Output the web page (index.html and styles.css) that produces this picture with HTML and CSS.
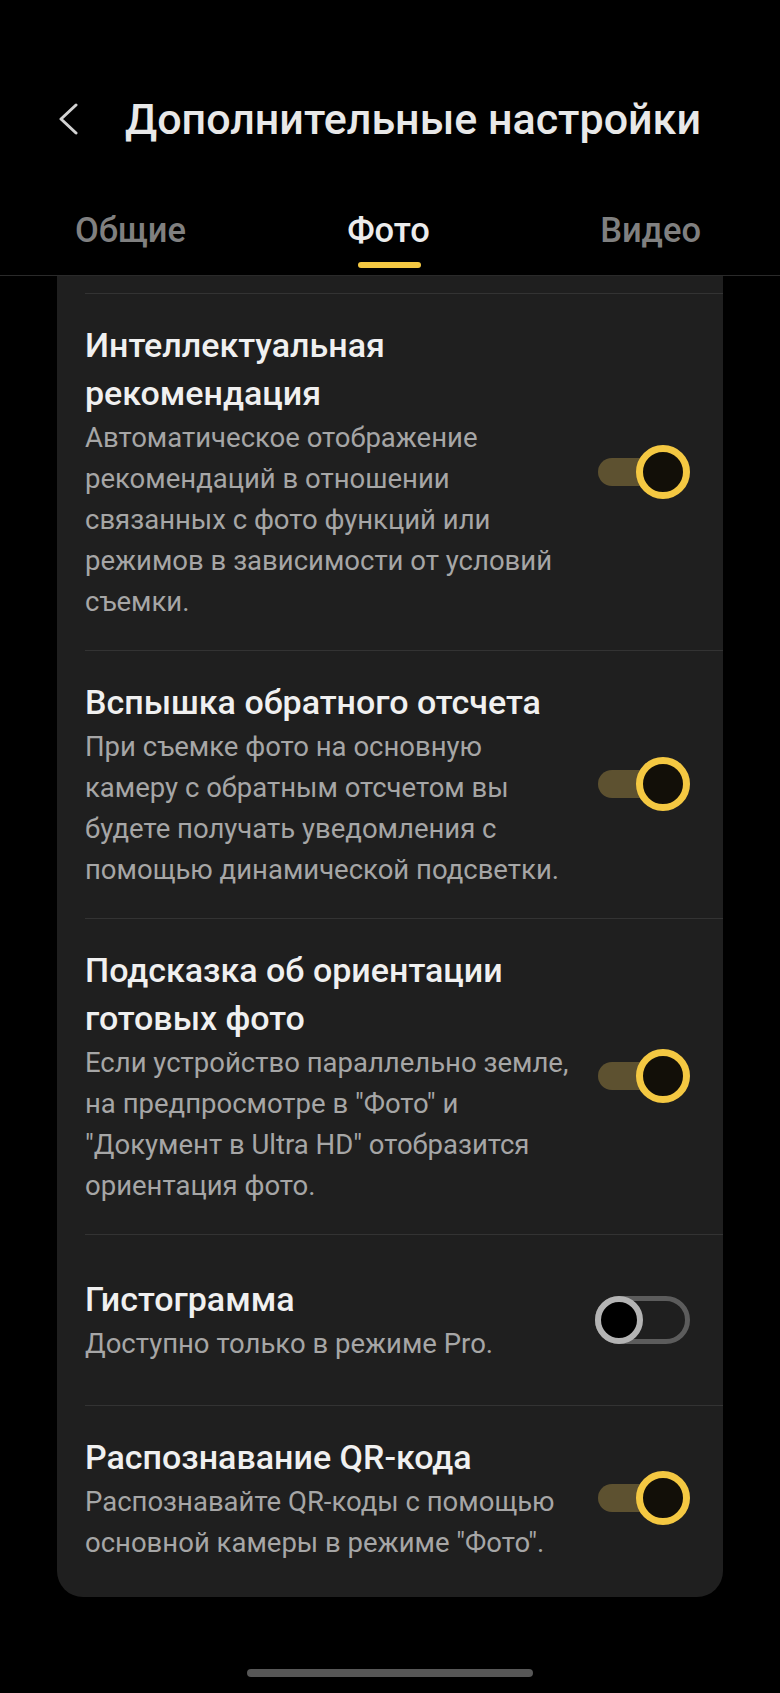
FILE: index.html
```html
<!DOCTYPE html>
<html lang="ru">
<head>
<meta charset="utf-8">
<title>Дополнительные настройки</title>
<link rel="stylesheet" href="styles.css">
</head>
<body>
<div class="screen">
  <header class="header">
    <div class="topbar">
      <svg class="back" width="20" height="32" viewBox="0 0 20 32"><path d="M18 2 L3 16 L18 30" fill="none" stroke="#d2d2d2" stroke-width="3" stroke-linecap="round" stroke-linejoin="round"/></svg>
      <h1 class="title">Дополнительные настройки</h1>
    </div>
    <nav class="tabs">
      <span class="tab tab-left">Общие</span>
      <span class="tab tab-active">Фото</span>
      <span class="tab tab-right">Видео</span>
    </nav>
  </header>

  <section class="card">
    <div class="row">
      <div class="text">
        <div class="t">Интеллектуальная<br>рекомендация</div>
        <div class="d">Автоматическое отображение<br>рекомендаций в отношении<br>связанных с фото функций или<br>режимов в зависимости от условий<br>съемки.</div>
      </div>
      <span class="switch on"><span class="knob"></span></span>
    </div>
    <div class="row">
      <div class="text">
        <div class="t">Вспышка обратного отсчета</div>
        <div class="d">При съемке фото на основную<br>камеру с обратным отсчетом вы<br>будете получать уведомления с<br>помощью динамической подсветки.</div>
      </div>
      <span class="switch on"><span class="knob"></span></span>
    </div>
    <div class="row">
      <div class="text">
        <div class="t">Подсказка об ориентации<br>готовых фото</div>
        <div class="d">Если устройство параллельно земле,<br>на предпросмотре в "Фото" и<br>"Документ в Ultra HD" отобразится<br>ориентация фото.</div>
      </div>
      <span class="switch on"><span class="knob"></span></span>
    </div>
    <div class="row row-short">
      <div class="text">
        <div class="t">Гистограмма</div>
        <div class="d">Доступно только в режиме Pro.</div>
      </div>
      <span class="switch off"><span class="knob"></span></span>
    </div>
    <div class="row">
      <div class="text">
        <div class="t">Распознавание QR-кода</div>
        <div class="d">Распознавайте QR-коды с помощью<br>основной камеры в режиме "Фото".</div>
      </div>
      <span class="switch on"><span class="knob"></span></span>
    </div>
  </section>

  <div class="home-bar"></div>
</div>
</body>
</html>
```

FILE: styles.css
```css
* { box-sizing: border-box; }

html, body {
  margin: 0;
  padding: 0;
  background: #000;
}

body {
  font-family: Roboto, "Noto Sans", "Liberation Sans", sans-serif;
  color: #ececec;
}

.screen {
  width: 780px;
  min-height: 1693px;
  background: #000;
  overflow: hidden;
}

.header {
  padding-top: 94px;
  padding-bottom: 7px;
  border-bottom: 1px solid #2a2a2a;
}

.topbar {
  display: flex;
  align-items: center;
  height: 50px;
  padding-left: 58px;
}

.back {
  flex-shrink: 0;
  margin-right: 47px;
}

.title {
  margin: 0;
  font-size: 43px;
  font-weight: 500;
  line-height: 50px;
  color: #e8e8e8;
  white-space: nowrap;
}

.tabs {
  display: grid;
  grid-template-columns: 1fr auto 1fr;
  margin-top: 66px;
  padding: 0 79px 0 76px;
}

.tab {
  font-size: 34.5px;
  font-weight: 500;
  line-height: 40px;
  color: #808080;
  display: flex;
  flex-direction: column;
  align-items: center;
}

.tab-left { justify-self: start; margin-left: -1px; }
.tab-right { justify-self: end; }

.tab-active {
  justify-self: center;
  color: #ececec;
}

.tab-active::after {
  content: "";
  width: 63px;
  height: 6px;
  margin-top: 12px;
  margin-left: 3px;
  border-radius: 3px;
  background: #f4c842;
}

.tab-left::after,
.tab-right::after {
  content: "";
  height: 6px;
  margin-top: 12px;
}

.card {
  margin: 0 57px;
  padding: 17px 0 6px 28px;
  background: #1f1f1f;
  border-radius: 0 0 26px 26px;
}

.row {
  display: flex;
  align-items: center;
  gap: 4px;
  padding: 27px 33px 28px 0;
  border-top: 1px solid #333333;
}

.row-short {
  min-height: 171px;
}

.text {
  flex: 1;
  min-width: 0;
}

.t {
  font-size: 34px;
  font-weight: 500;
  line-height: 48px;
  color: #f0f0f0;
}

.d {
  font-size: 27.5px;
  font-weight: 400;
  line-height: 41px;
  color: #a6a6a6;
}

.switch {
  position: relative;
  flex-shrink: 0;
  width: 95px;
}

.switch.on {
  height: 54px;
}

.switch.on::before {
  content: "";
  position: absolute;
  left: 3px;
  right: 12px;
  top: 13px;
  height: 28px;
  border-radius: 14px;
  background: #5d5130;
}

.switch.on .knob {
  position: absolute;
  right: 0;
  top: 0;
  width: 54px;
  height: 54px;
  border-radius: 50%;
  border: 7px solid #f4c842;
  background: #120f08;
}

.switch.off {
  height: 48px;
  border: 5px solid #5c5c5c;
  border-radius: 24px;
}

.switch.off .knob {
  position: absolute;
  left: -5px;
  top: -5px;
  width: 48px;
  height: 48px;
  border-radius: 50%;
  border: 6px solid #b4b4b4;
  background: #000;
}

.home-bar {
  width: 286px;
  height: 8px;
  margin: 72px auto 0;
  border-radius: 4px;
  background: #575757;
}
```
